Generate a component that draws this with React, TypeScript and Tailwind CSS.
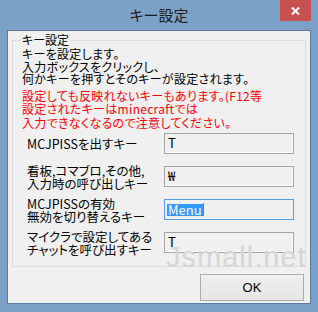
import React from "react";

const jp = "font-['Noto_Sans_CJK_JP','Noto_Sans',sans-serif] [font-feature-settings:'palt']";

function KeyField({ value, focused }: { value: string; focused?: boolean }) {
    if (focused) {
        return (
            <div className="w-[130px] h-[21px] border border-[#569de5] bg-[#f0f0f0] pl-[2px] flex items-center">
                <span className={`${jp} bg-[#3399ff] text-white text-[13px] leading-[12px] h-[12px] px-[1px]`}>
                    {value}
                </span>
                <span className="w-px h-[13px] bg-[#c26a1e]" />
            </div>
        );
    }
    return (
        <div className="w-[130px] h-[21px] border border-[#a5a5a5] shadow-[inset_-1px_-1px_0_#ffffff] bg-[#f0f0f0] pl-[3px] flex items-center">
            <span className={`${jp} text-[13px] leading-[13px] text-black -mt-[3px]`}>{value}</span>
        </div>
    );
}

function KeyRow({ label, value, focused }: { label: React.ReactNode; value: string; focused?: boolean }) {
    return (
        <div className="flex items-center h-[21px]">
            <div className={`${jp} w-[137px] text-[12.5px] leading-[13px] text-black`}>{label}</div>
            <KeyField value={value} focused={focused} />
        </div>
    );
}

export default function App() {
    return (
        <div className="w-[318px] h-[312px] bg-[#7ba1c6] flex flex-col overflow-hidden">
            {/* タイトルバー */}
            <div className="h-[30px] relative flex items-center justify-center">
                <span className={`${jp} text-[15px] text-[#1e1e1e] mt-[1px]`}>キー設定</span>
                <button className="absolute right-[7px] top-0 w-[31px] h-[21px] bg-[#c75050] flex items-center justify-center">
                    <svg width="9" height="8" viewBox="0 0 9 8">
                        <path d="M1 0.5 L8 7.5 M8 0.5 L1 7.5" stroke="#ffffff" strokeWidth="2" />
                    </svg>
                </button>
            </div>

            {/* 本体 */}
            <div className="flex-1 mx-[7px] mb-[8px] border border-[#5a7b9e] bg-[#f0f0f0] relative flex flex-col">
                <div className="mt-[9px] mx-[4px] h-[227px] border border-[#dcdcdc] relative">
                    <span className={`${jp} absolute -top-[8px] left-[8px] px-[1px] bg-[#f0f0f0] text-[12px] leading-[13px] text-black`}>
                        キー設定
                    </span>

                    <div className={`${jp} pl-[9px] pt-[7px] text-[12px] leading-[12.5px] tracking-[0.3px] text-black`}>
                        <p>キーを設定します。</p>
                        <p>入力ボックスをクリックし、</p>
                        <p>何かキーを押すとそのキーが設定されます。</p>
                    </div>
                    <div className={`${jp} pl-[9px] mt-[3px] text-[12px] leading-[13.5px] tracking-[0.3px] text-[#ff0000]`}>
                        <p>設定しても反映れないキーもあります。(F12等</p>
                        <p>設定されたキーはminecraftでは</p>
                        <p>入力できなくなるので注意してください。</p>
                    </div>

                    <div className="pl-[14px] mt-[4px] flex flex-col gap-[12px]">
                        <KeyRow label="MCJPISSを出すキー" value="T" />
                        <KeyRow
                            label={
                                <>
                                    看板,コマブロ,その他,
                                    <br />
                                    入力時の呼び出しキー
                                </>
                            }
                            value="₩"
                        />
                        <KeyRow
                            label={
                                <>
                                    MCJPISSの有効
                                    <br />
                                    無効を切り替えるキー
                                </>
                            }
                            value="Menu"
                            focused
                        />
                        <KeyRow
                            label={
                                <>
                                    マイクラで設定してある
                                    <br />
                                    チャットを呼び出すキー
                                </>
                            }
                            value="T"
                        />
                    </div>
                </div>

                {/* 透かし */}
                <span className="absolute left-[158px] top-[211px] font-['Liberation_Sans',sans-serif] text-[29px] leading-[30px] text-[#d6d6d6] tracking-[1px] pointer-events-none">
                    Jsmall.net
                </span>

                <div className="mt-[7px] flex justify-end pr-[6px]">
                    <button className="w-[104px] h-[27px] border border-[#adadad] bg-gradient-to-b from-[#f0f0f0] to-[#e5e5e5] font-['Liberation_Sans',sans-serif] text-[13px] text-black">
                        OK
                    </button>
                </div>
            </div>
        </div>
    );
}
